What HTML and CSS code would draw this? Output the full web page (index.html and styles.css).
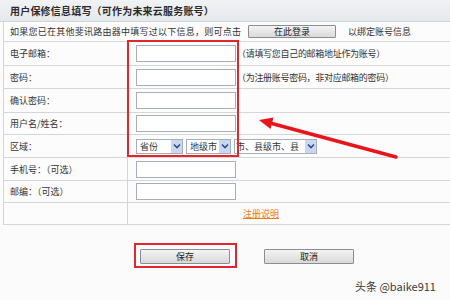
FILE: index.html
```html
<!DOCTYPE html>
<html lang="zh-CN">
<head>
<meta charset="utf-8">
<link rel="stylesheet" href="styles.css">
</head>
<body>
<div class="page">
  <div class="hdr">用户保修信息填写（可作为未来云服务账号）</div>
  <div class="tbl">
    <div class="info">
      <span class="info-text">如果您已在其他斐讯路由器中填写过以下信息，则可点击</span>
      <span class="btn btn-login">在此登录</span>
      <span class="info-after">以绑定账号信息</span>
    </div>
    <div class="row r1">
      <div class="lab">电子邮箱：</div>
      <div class="val"><input class="txt" type="text"><span class="hint">（请填写您自己的邮箱地址作为账号）</span></div>
    </div>
    <div class="row r2">
      <div class="lab">密码：</div>
      <div class="val"><input class="txt" type="text"><span class="hint">（为注册账号密码，非对应邮箱的密码）</span></div>
    </div>
    <div class="row r3">
      <div class="lab">确认密码：</div>
      <div class="val"><input class="txt" type="text"></div>
    </div>
    <div class="row r4">
      <div class="lab">用户名/姓名：</div>
      <div class="val"><input class="txt" type="text"></div>
    </div>
    <div class="row r5">
      <div class="lab">区域：</div>
      <div class="val">
        <div class="sel s1"><span class="sel-text">省份</span><span class="sel-arrow"><svg width="8" height="6" viewBox="0 0 8 6"><path d="M1 1.5 L4 4.5 L7 1.5" fill="none" stroke="#2b4d8f" stroke-width="1.6"/></svg></span></div>
        <div class="sel s2"><span class="sel-text">地级市</span><span class="sel-arrow"><svg width="8" height="6" viewBox="0 0 8 6"><path d="M1 1.5 L4 4.5 L7 1.5" fill="none" stroke="#2b4d8f" stroke-width="1.6"/></svg></span></div>
        <div class="sel s3"><span class="sel-text">市、县级市、县</span><span class="sel-arrow"><svg width="8" height="6" viewBox="0 0 8 6"><path d="M1 1.5 L4 4.5 L7 1.5" fill="none" stroke="#2b4d8f" stroke-width="1.6"/></svg></span></div>
      </div>
    </div>
    <div class="row r6">
      <div class="lab">手机号：（可选）</div>
      <div class="val"><input class="txt" type="text"></div>
    </div>
    <div class="row r7">
      <div class="lab">邮编：（可选）</div>
      <div class="val"><input class="txt" type="text"></div>
    </div>
    <div class="row r8">
      <div class="lab"></div>
      <div class="val link-cell"><span class="reg-link">注册说明</span></div>
    </div>
  </div>
  <div class="btns">
    <span class="btn btn-save">保存</span>
    <span class="btn btn-cancel">取消</span>
  </div>
  <div class="wm">头条 @baike911</div>

  <div class="mark mark-inputs"></div>
  <div class="mark mark-save"></div>
  <svg class="arrow" width="450" height="300" viewBox="0 0 450 300">
    <line x1="396" y1="157" x2="270" y2="123" stroke="#e8161b" stroke-width="3.5" stroke-linecap="round"/>
    <polygon points="259,120 273.5,117.5 270.5,129" fill="#e8161b"/>
  </svg>
</div>
</body>
</html>
```

FILE: styles.css
```css
html, body {
  margin: 0;
  padding: 0;
  background: #fbfbfb;
  overflow: hidden;
}
body {
  width: 450px;
  height: 300px;
  font-family: "Noto Sans CJK SC", "Liberation Sans", sans-serif;
  font-size: 9px;
  color: #333;
}
.page {
  position: relative;
  width: 450px;
  height: 300px;
  overflow: hidden;
}
.hdr {
  box-sizing: border-box;
  height: 22px;
  width: 470px;
  padding-left: 10px;
  display: flex;
  align-items: center;
  font-size: 10px;
  letter-spacing: 0.2px;
  font-weight: bold;
  color: #2b2b2b;
  background: linear-gradient(#f0f2f4, #e6e9ec);
  border-bottom: 1px solid #cfd4d9;
}
.tbl {
  margin-left: 3px;
  width: 470px;
  border-left: 1px solid #d3d6da;
  border-bottom: 1px solid #d3d6da;
  background: #fcfcfc;
}
.info {
  box-sizing: border-box;
  height: 20px;
  display: flex;
  align-items: center;
  padding-left: 6px;
  border-bottom: 1px solid #d3d6da;
  white-space: nowrap;
}
.info-text {
  width: 229px;
  letter-spacing: 0.25px;
}
.btn {
  box-sizing: border-box;
  display: flex;
  align-items: center;
  justify-content: center;
  border: 1px solid #8a8d92;
  border-radius: 1px;
  background: linear-gradient(#f4f4f4, #d9d9d9);
  color: #222;
  font-size: 9px;
}
.btn-login {
  width: 88px;
  height: 13px;
  margin-left: 9px;
}
.info-after {
  margin-left: 12px;
}
.row {
  box-sizing: border-box;
  height: 23px;
  display: flex;
  border-bottom: 1px solid #d3d6da;
}
.r1 { height: 24px; }
.r3 { height: 24px; }
.r4 { height: 22px; }
.r7 { height: 22px; }
.r8 { height: 21px; border-bottom: none; }
.lab {
  box-sizing: border-box;
  width: 124px;
  padding-left: 6px;
  display: flex;
  align-items: center;
  border-right: 1px solid #d3d6da;
  white-space: nowrap;
}
.val {
  flex: 1;
  display: flex;
  align-items: center;
  padding-left: 8px;
  white-space: nowrap;
}
.txt {
  box-sizing: border-box;
  width: 100px;
  height: 17px;
  margin: 0;
  padding: 0;
  border: 1px solid #a6aeb9;
  background: #fff;
  outline: none;
}
.hint {
  margin-left: 1px;
  letter-spacing: -0.3px;
}
.sel {
  box-sizing: border-box;
  height: 15px;
  display: flex;
  align-items: center;
  justify-content: space-between;
  border: 1px solid #a6aeb9;
  background: #fff;
  margin-right: 3px;
  overflow: hidden;
}
.s1 { width: 47px; }
.s2 { width: 45px; }
.s3 { width: 83px; }
.sel-text {
  padding-left: 3px;
  white-space: nowrap;
}
.s3 .sel-text { padding-left: 1px; }
.sel-arrow {
  width: 11px;
  height: 13px;
  display: flex;
  align-items: center;
  justify-content: center;
  background: #c9d8f0;
  flex-shrink: 0;
}
.link-cell {
  padding-left: 115px;
}
.reg-link {
  color: #f07a1c;
  text-decoration: underline;
}
.btns {
  display: flex;
  margin-top: 24px;
  padding-left: 140px;
  gap: 34px;
}
.btn-save, .btn-cancel {
  width: 90px;
  height: 15px;
}
.wm {
  margin-top: 14px;
  padding-left: 355px;
  font-size: 11px;
  color: #3a3a3a;
  white-space: nowrap;
}
.mark {
  position: absolute;
  box-sizing: border-box;
  border: 2px solid #e3262b;
}
.mark-inputs {
  left: 127px;
  top: 40px;
  width: 112px;
  height: 117px;
}
.mark-save {
  left: 134px;
  top: 243px;
  width: 103px;
  height: 25px;
}
.arrow {
  position: absolute;
  left: 0;
  top: 0;
  pointer-events: none;
}
```
